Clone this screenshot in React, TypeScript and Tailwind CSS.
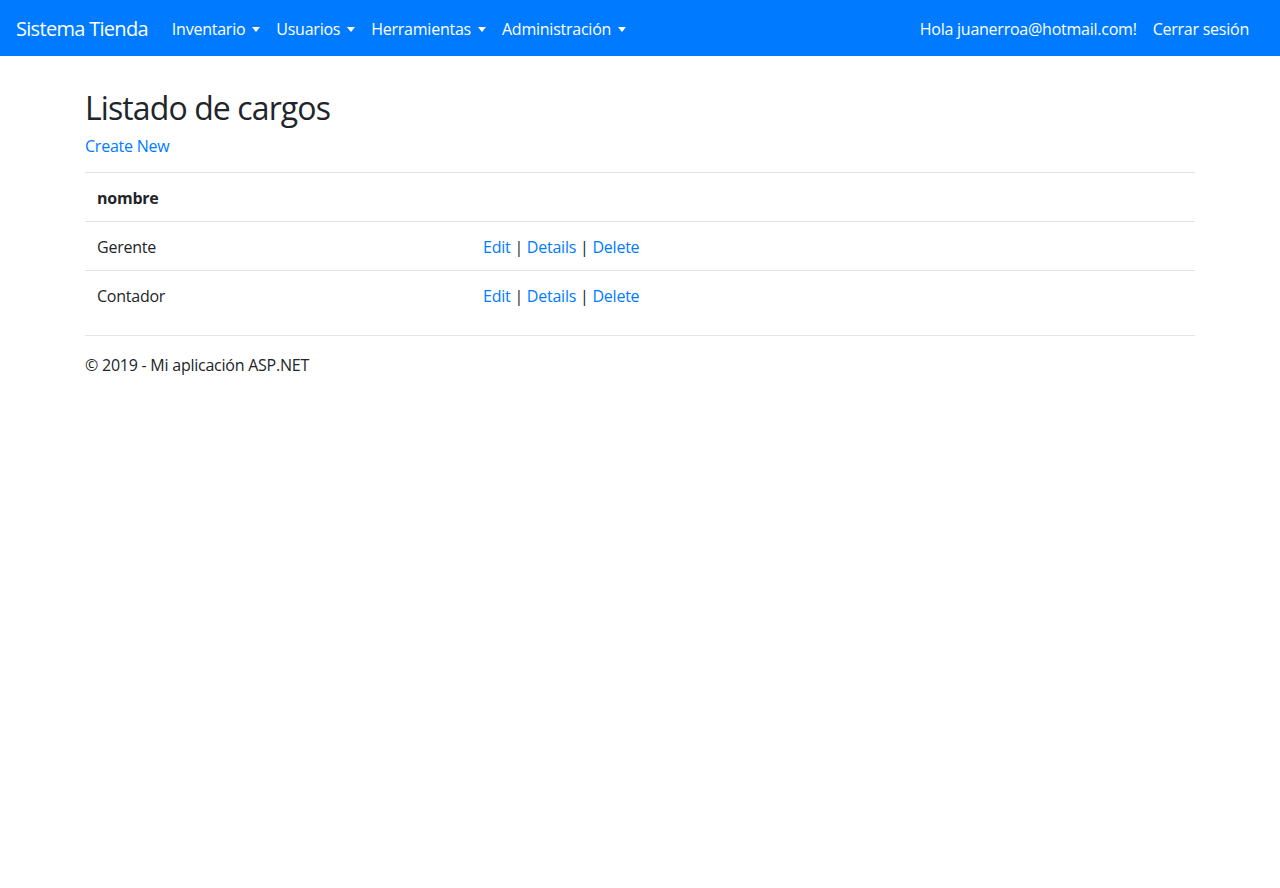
import { Fragment } from 'react';

const menus = ['Inventario', 'Usuarios', 'Herramientas', 'Administración'];

const cargos = ['Gerente', 'Contador'];

function Caret() {
  return (
    <span className="ml-[7px] inline-block border-x-[4px] border-t-[5px] border-x-transparent border-t-white" />
  );
}

function Actions() {
  return (
    <span>
      <a href="#" className="text-[#007bff]">Edit</a> |{' '}
      <a href="#" className="text-[#007bff]">Details</a> |{' '}
      <a href="#" className="text-[#007bff]">Delete</a>
    </span>
  );
}

export default function App() {
  return (
    <div className="min-h-screen bg-white text-[16px] leading-6 tracking-[-0.015em] text-[#212529] font-['Segoe_UI','Open_Sans',sans-serif]">
      <nav className="flex h-14 items-center bg-[#007bff] px-4 pt-[2px] text-white">
        <a href="#" className="mr-4 text-[20px] leading-[30px] tracking-[-0.035em]">Sistema Tienda</a>
        <ul className="flex">
          {menus.map((m) => (
            <li key={m}>
              <a href="#" className="flex items-center px-2 py-2">
                {m}
                <Caret />
              </a>
            </li>
          ))}
        </ul>
        <ul className="ml-auto flex pr-[7px]">
          <li>
            <a href="#" className="block px-2 py-2">Hola juanerroa@hotmail.com!</a>
          </li>
          <li>
            <a href="#" className="block px-2 py-2">Cerrar sesión</a>
          </li>
        </ul>
      </nav>

      <div className="mx-auto max-w-[1140px] px-[15px]">
        <h2 className="mt-[33px] mb-[7px] text-[32px] leading-[37px] tracking-[-0.028em]">Listado de cargos</h2>
        <p className="mb-[14px] pt-px">
          <a href="#" className="text-[#007bff]">Create New</a>
        </p>

        <div className="mb-4 grid grid-cols-[386px_1fr] border-t border-[#dee2e6]">
          <div className="border-b border-[#dee2e6] px-3 pt-[13px] pb-[11px] font-bold">nombre</div>
          <div className="border-b border-[#dee2e6] p-3" />
          {cargos.map((c, i) => (
            <Fragment key={c}>
              <div className={`px-3 pt-[13px] pb-[11px] ${i < cargos.length - 1 ? 'border-b border-[#dee2e6]' : ''}`}>{c}</div>
              <div className={`px-3 pt-[13px] pb-[11px] ${i < cargos.length - 1 ? 'border-b border-[#dee2e6]' : ''}`}>
                <Actions />
              </div>
            </Fragment>
          ))}
        </div>

        <hr className="mb-4 border-t border-[#e5e5e5]" />
        <footer>
          <p className="pt-px">© 2019 - Mi aplicación ASP.NET</p>
        </footer>
      </div>
    </div>
  );
}
